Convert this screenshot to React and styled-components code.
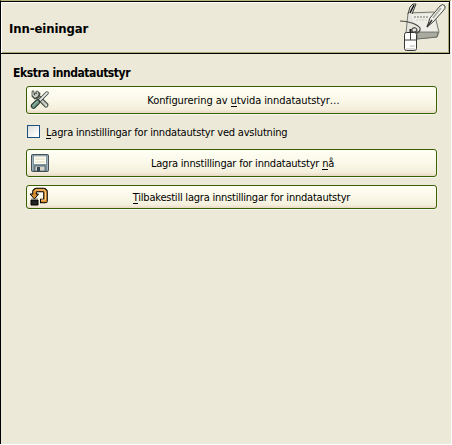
import React from "react";
import styled, { createGlobalStyle } from "styled-components";

const GlobalStyle = createGlobalStyle`
  * { box-sizing: border-box; }
  body { margin: 0; background: #fff; overflow: hidden; }
`;

const Page = styled.main`
  width: 451px;
  height: 444px;
  background: #ece9d8;
  border-left: 1px solid #000;
  border-top: 1px solid #b7b17e;
  color: #000;
  font-family: "DejaVu Sans Condensed", "DejaVu Sans", sans-serif;
  font-stretch: condensed;
  font-size: 11px;
`;

const Header = styled.header`
  display: flex;
  align-items: center;
  justify-content: space-between;
  width: 449px;
  height: 53px;
  padding: 0 3px 0 7px;
  border: solid #000;
  border-width: 1px 1px 1px 0;
  box-shadow: inset 1px 1px #fff, inset -1px -1px #aca978;
`;

const Title = styled.h1`
  margin: 0 0 0 1px;
  padding-top: 1px;
  font-size: 13px;
  line-height: 17px;
  font-weight: bold;
  letter-spacing: ${(p) => p.$spacing || 0}px;
`;

const Section = styled.section`
  padding: 12px 13px 0 12px;
`;

const SectionTitle = styled.h2`
  margin: 0;
  font-size: 12px;
  line-height: 15px;
  font-weight: bold;
  letter-spacing: ${(p) => p.$spacing || 0}px;
`;

const Controls = styled.div`
  display: flex;
  flex-direction: column;
  padding: 5px 0 0 13px;
`;

const Button = styled.button`
  display: grid;
  grid-template-columns: 20px 1fr;
  align-items: center;
  width: 411px;
  height: ${(p) => p.$height}px;
  margin: 0 0 ${(p) => p.$gap || 0}px;
  padding: 0 3px;
  border: 1px solid #376000;
  border-radius: 3px;
  background: linear-gradient(#fffff5, #faf8e8 50%, #f4efdc 86%, #e8d9c5);
  box-shadow: 0 1px #f8f6ec, 1px 0 #f5f2e6;
  color: #000;
  font: inherit;
`;

const Label = styled.span`
  justify-self: center;
  padding-top: 2px;
  padding-left: ${(p) => p.$shift || 0}px;
  line-height: 14px;
  white-space: nowrap;
  letter-spacing: ${(p) => p.$spacing || 0}px;
`;

const Key = styled.span`
  box-shadow: 0 -1px inset #000;
`;

const CheckRow = styled.label`
  display: flex;
  align-items: center;
  gap: 6px;
  height: 15px;
  margin: 10px 0;
  padding-left: 1px;
`;

const Checkbox = styled.input`
  appearance: none;
  width: 13px;
  height: 13px;
  margin: 0;
  border: 1px solid #1c5180;
  background: linear-gradient(135deg, #dcdcd7, #fff 85%);
`;

const Icon = styled.svg`
  display: block;
  overflow: visible;
`;

const TabletIcon = () => (
  <Icon width="46" height="48" viewBox="0 0 46 48" fill="none">
    <path d="M8 9 34 8l5 20-2 5-21 2-10-6z" fill="#e5e5de" stroke="#777870" />
    <path d="M10 10h23l4 18H18z" fill="#eeeee6" />
    <path d="M17 28h21l-1 5-20 2z" fill="#a9aaa0" stroke="#62635d" strokeWidth=".8" />
    <path d="m8 10 2-7 3-3h3l-4 10" fill="#e7e8e0" stroke="#383934" />
    <path d="m10 9 4-8" stroke="#161616" strokeWidth="1.6" />
    <path d="M14 13h15" stroke="#b0b1a8" strokeWidth="2" strokeDasharray="2 1" />
    <path d="M16 16h14" stroke="#d0d0c8" strokeDasharray="2 1" />
    <path d="M0 17c8 0 17 3 20 7 1 5-7 7-8 3-1-3 4-5 5-1 0 4-7 0-7 5" stroke="#484944" strokeWidth="1.2" />
    <path d="m27 23 3-9L40 2q3-3 5 0 1 2-2 5L33 18z" fill="#f4f5ee" stroke="#42433e" />
    <path d="m27 23 5-7" stroke="#333" strokeWidth="1.4" />
    <path d="M41 4 33 14" stroke="#b0b1a9" strokeWidth="2" />
    <rect x="4.5" y="28.5" width="12" height="18" rx="2" fill="#fff" stroke="#353632" />
    <path d="M5 36h11M10.5 29v7" stroke="#41423d" />
    <path d="M10.5 25v4" stroke="#222" strokeWidth="2" />
    <path d="M10 42h5M6 45h9" stroke="#b6b7ae" />
  </Icon>
);

const ToolsIcon = () => (
  <Icon width="20" height="20" viewBox="0 0 20 20" fill="none" strokeLinecap="round">
    <path d="m6 5 10 10" stroke="#454d45" strokeWidth="5" />
    <path d="m6 5 10 10" stroke="#bfc5bd" strokeWidth="2.7" />
    <path d="M3 2v4l2 2 3-1 1-3-2-2" stroke="#454d45" strokeWidth="2.8" />
    <path d="M3 2v3l2 2 2-1 1-2-1-2" stroke="#d6d8ce" strokeWidth="1.2" />
    <circle cx="16" cy="15.5" r="1" fill="#ece9d8" />
    <path d="M17 3 9 11" stroke="#3b423d" strokeWidth="3.5" />
    <path d="M17 3 9 11" stroke="#e5e8e3" strokeWidth="1.8" />
    <path d="m7.5 12-4 4" stroke="#26342e" strokeWidth="5.4" />
    <path d="m7.5 12-4 4" stroke="#6e9686" strokeWidth="3.2" />
    <path d="m7 11.5-4 4" stroke="#a5c1b0" />
  </Icon>
);

const DiskIcon = () => (
  <Icon width="20" height="20" viewBox="0 0 20 20">
    <rect x="1.5" y="1.5" width="17" height="17" rx="1" fill="#7b929f" stroke="#444e54" />
    <path d="M4 2h12v9H4z" fill="#fffef0" />
    <path d="M4 2h12v1.5H4z" fill="#9aa9a9" />
    <path d="M5 6h10M5 9h10" stroke="#dad7c0" />
    <path d="M5 13h10v5H5z" fill="#d3d5ca" stroke="#495159" strokeWidth=".7" />
    <path d="M7 14h3v4H7z" fill="#364650" />
    <path d="M2.5 3v14M17.5 3v14" stroke="#a2b5be" />
  </Icon>
);

const RevertIcon = () => (
  <Icon width="20" height="20" viewBox="0 0 20 20" fill="none">
    <path d="M4.5 8V4.5L6 3h8l1.5 1.5V14H10" stroke="#000" strokeWidth="4.6" strokeLinejoin="round" />
    <path d="M0 7h8.5L4.5 12z" fill="#dc9134" stroke="#000" />
    <path d="M4.5 9V4.5L6 3h8l1.5 1.5V14H11" stroke="#d48b2c" strokeWidth="2.7" />
    <path d="M5 4.5 6.5 3H14l1.5 2v8H11" stroke="#ffd08b" strokeWidth="1" />
    <path d="M1 13h7v5H1z" fill="#222" stroke="#000" />
    <path d="M1 12h2M6 12h2" stroke="#777" />
  </Icon>
);

export default function App() {
  return (
    <>
      <GlobalStyle />
      <Page>
        <Header>
          <Title $spacing={-0.1}>Inn-einingar</Title>
          <TabletIcon />
        </Header>
        <Section>
          <SectionTitle $spacing={-0.44}>Ekstra inndatautstyr</SectionTitle>
          <Controls>
            <Button $height={28}>
              <ToolsIcon />
              <Label $spacing={-0.08} $shift={4}>
                Konfigurering av <Key>u</Key>tvida inndatautstyr…
              </Label>
            </Button>
            <CheckRow>
              <Checkbox type="checkbox" />
              <Label $spacing={-0.2}>
                <Key>L</Key>agra innstillingar for inndatautstyr ved avslutning
              </Label>
            </CheckRow>
            <Button $height={28} $gap={8}>
              <DiskIcon />
              <Label $spacing={-0.2} $shift={2}>
                Lagra innstillingar for inndatautstyr <Key>n</Key>å
              </Label>
            </Button>
            <Button $height={24}>
              <RevertIcon />
              <Label $spacing={-0.22}>
                <Key>T</Key>ilbakestill lagra innstillingar for inndatautstyr
              </Label>
            </Button>
          </Controls>
        </Section>
      </Page>
    </>
  );
}
